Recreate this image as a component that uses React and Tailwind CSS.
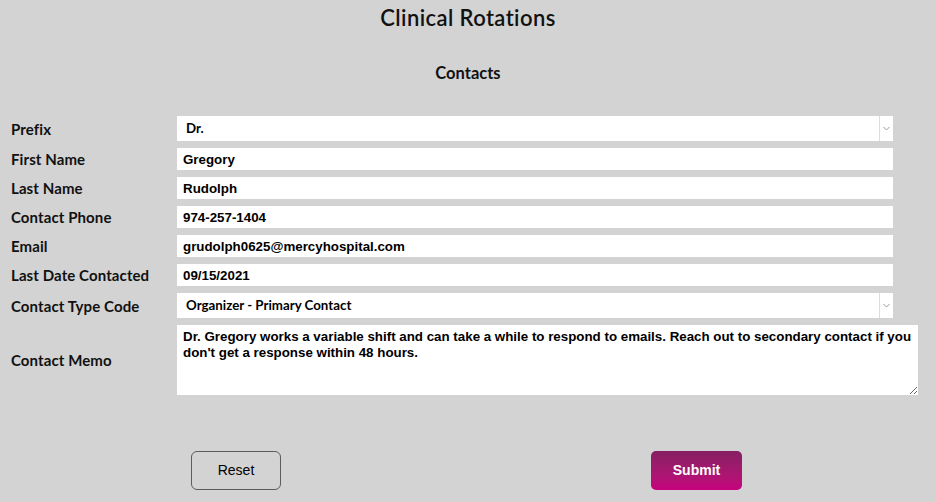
const labelFont = { fontFamily: "Lato, 'Noto Sans', sans-serif" };

const Label = ({ children }) => (
  <div
    className="w-[166px] shrink-0 text-[15px] leading-[18px] font-bold text-[#111] tracking-[0.1px]"
    style={labelFont}
  >
    {children}
  </div>
);

const TextInput = ({ value }) => (
  <input
    defaultValue={value}
    className="w-[716px] h-[22px] bg-white px-[6px] text-[13.33px] font-bold text-black outline-none font-['Liberation_Sans',Arial,sans-serif]"
  />
);

const SelectBox = ({ value }) => (
  <div className="flex w-[716px] h-[25px] bg-white">
    <div
      className="flex-1 flex items-center pl-[9px] text-[13.3px] font-bold text-black"
      style={labelFont}
    >
      {value}
    </div>
    <div className="w-[14px] border-l border-[#dcdcdc] flex items-center justify-center">
      <svg width="7" height="5" viewBox="0 0 7 5">
        <path d="M0.5 1 L3.5 4 L6.5 1" fill="none" stroke="#9a9a9a" strokeWidth="1" />
      </svg>
    </div>
  </div>
);

export default function App() {
  return (
    <div className="min-h-[502px] w-full bg-[#d3d3d3] flex flex-col">
      <h1
        className="text-center text-[22px] font-semibold leading-[28px] text-[#111] pt-[4px] tracking-[0.4px]"
        style={labelFont}
      >
        Clinical Rotations
      </h1>
      <h2
        className="text-center text-[16.5px] font-bold text-[#111] mt-[31px] leading-[20px]"
        style={labelFont}
      >
        Contacts
      </h2>

      <div className="flex flex-col gap-[7px] pl-[11px] mt-[33px]">
        <div className="flex items-center">
          <Label>Prefix</Label>
          <SelectBox value="Dr." />
        </div>
        <div className="flex items-center">
          <Label>First Name</Label>
          <TextInput value="Gregory" />
        </div>
        <div className="flex items-center">
          <Label>Last Name</Label>
          <TextInput value="Rudolph" />
        </div>
        <div className="flex items-center">
          <Label>Contact Phone</Label>
          <TextInput value="974-257-1404" />
        </div>
        <div className="flex items-center">
          <Label>Email</Label>
          <TextInput value="grudolph0625@mercyhospital.com" />
        </div>
        <div className="flex items-center">
          <Label>Last Date Contacted</Label>
          <TextInput value="09/15/2021" />
        </div>
        <div className="flex items-center">
          <Label>Contact Type Code</Label>
          <SelectBox value="Organizer - Primary Contact" />
        </div>
        <div className="flex items-center">
          <Label>Contact Memo</Label>
          <textarea
            defaultValue="Dr. Gregory works a variable shift and can take a while to respond to emails. Reach out to secondary contact if you don't get a response within 48 hours."
            className="w-[741px] h-[70px] bg-white px-[6px] py-[4px] text-[13.33px] leading-[16px] font-bold text-black outline-none font-['Liberation_Sans',Arial,sans-serif]"
          />
        </div>
      </div>

      <div className="flex pl-[191px] gap-[370px] mt-[56px]">
        <button className="w-[90px] h-[39px] rounded-[6px] border border-[#5c5c5c] text-[14px] text-black font-['Liberation_Sans',Arial,sans-serif]">
          Reset
        </button>
        <button className="w-[91px] h-[39px] rounded-[5px] bg-gradient-to-b from-[#851f62] to-[#c6007d] text-[14px] font-bold text-white font-['Liberation_Sans',Arial,sans-serif]">
          Submit
        </button>
      </div>
    </div>
  );
}
